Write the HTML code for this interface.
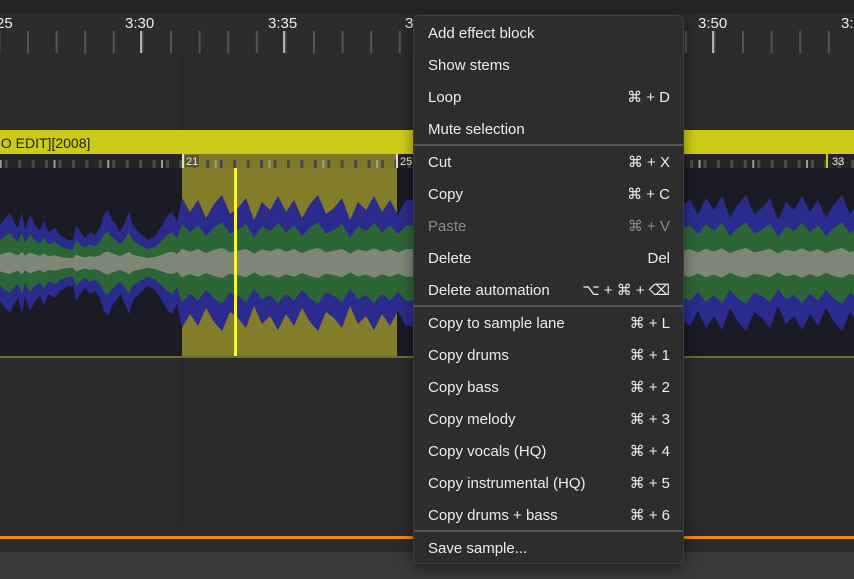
<!DOCTYPE html>
<html><head><meta charset="utf-8"><style>
body{margin:0;width:854px;height:579px;overflow:hidden;background:#2b2b2b;font-family:"Liberation Sans",sans-serif;}
svg{position:absolute;left:0;top:0}
.menu{position:absolute;left:413px;top:15px;width:269px;height:547px;background:#2d2d2d;border:1px solid #3e3e3e;border-radius:6px;box-shadow:0 4px 14px rgba(0,0,0,.45);}
.it{position:absolute;left:14px;right:13px;height:20px;line-height:20px;font-size:15px;color:#ececec;white-space:nowrap}
.it span{position:absolute;right:0;top:0}
.dis{color:#8a8a8a}
.sep{position:absolute;left:0;right:0;height:2px;background:#555}
</style></head><body>
<svg width="854" height="579" viewBox="0 0 854 579">
<defs>
<pattern id="rt" x="-1.6" y="0" width="28.6" height="60" patternUnits="userSpaceOnUse"><rect x="0" y="31" width="2" height="22" fill="#555"/></pattern>
<pattern id="gt" x="20.75" y="0" width="53.75" height="600" patternUnits="userSpaceOnUse"><rect x="0" y="0" width="1" height="600" fill="#262626"/></pattern>
<pattern id="bt" x="-1.25" y="0" width="13.4375" height="20" patternUnits="userSpaceOnUse"><rect x="6" y="0" width="3" height="13" fill="#4a4a4a"/></pattern>
<pattern id="bt2" x="-1.25" y="0" width="53.75" height="20" patternUnits="userSpaceOnUse"><rect x="1" y="0" width="2" height="13" fill="#9a9a9a"/></pattern>
<path id="wv" d="M0,263 L0,225 5,218 10,213 14,222 18,228 22,212 25,230 30,215 35,225 40,230 44,220 48,232 55,228 60,235 68,240 73,240 76,225 80,232 85,238 90,232 95,235 100,228 104,215 108,210 112,220 116,225 120,232 125,222 129,212 133,226 140,233 148,240 155,236 162,225 168,215 172,212 177,222 182,198 190,212 198,200 206,218 214,204 222,195 230,214 238,208 246,198 254,220 262,202 270,210 278,196 286,212 294,200 302,218 310,204 318,195 326,214 334,208 342,198 350,220 358,202 366,210 374,196 382,212 390,200 398,215 406,200 683,205 690,200 698,215 706,198 714,210 722,196 730,218 738,204 746,195 754,214 762,208 770,198 778,220 786,202 794,210 802,196 810,212 818,200 826,218 834,204 842,195 850,214 854,208 854,263 Z"/>
</defs>
<rect x="0" y="0" width="854" height="14" fill="#232323"/>
<rect x="0" y="14" width="854" height="41" fill="#2c2c2c"/>
<rect x="0" y="14" width="854" height="41" fill="url(#rt)"/>
<rect x="140" y="31" width="2" height="22" fill="#b0b0b0"/>
<rect x="283" y="31" width="2" height="22" fill="#b0b0b0"/>
<rect x="712" y="31" width="2" height="22" fill="#b0b0b0"/>
<g fill="#ececec" font-family="Liberation Sans" font-size="15">
<text x="-4" y="28">25</text>
<text x="125" y="28">3:30</text>
<text x="268" y="28">3:35</text>
<text x="405" y="28">3</text>
<text x="698" y="28">3:50</text>
<text x="841" y="28">3:</text>
</g>
<rect x="0" y="55" width="854" height="75" fill="#2b2b2b"/>
<rect x="0" y="55" width="854" height="75" fill="url(#gt)"/>
<rect x="182" y="55" width="1" height="75" fill="#1d1d2a"/>
<rect x="0" y="130" width="854" height="24" fill="#cccc18"/>
<text x="-3" y="148" font-family="Liberation Sans" font-size="14" fill="#222">IO EDIT][2008]</text>
<rect x="0" y="154" width="854" height="14" fill="#242424"/>
<rect x="182" y="154" width="215" height="14" fill="#7f7a28"/>
<rect x="0" y="154" width="854" height="14" fill="url(#bt)"/>
<rect x="0" y="154" width="854" height="14" fill="url(#bt2)"/>
<rect x="182" y="154" width="2" height="14" fill="#ddd"/>
<rect x="396" y="154" width="2" height="14" fill="#ddd"/>
<rect x="826" y="154" width="2" height="14" fill="#cccc18"/>
<g font-family="Liberation Sans" font-size="11" fill="#eee"><rect x="185" y="155" width="14" height="12" fill="#555530"/><text x="186" y="165">21</text><text x="400" y="165">25</text><text x="832" y="165">33</text></g>
<rect x="0" y="168" width="854" height="188" fill="#1b1b26"/>
<rect x="182" y="168" width="215" height="188" fill="#827c2b"/>
<use href="#wv" fill="#2b2b8e"/>
<use href="#wv" fill="#2b2b8e" transform="translate(0,526) scale(1,-1)"/>
<use href="#wv" fill="#2c6636" transform="translate(0,263) scale(1,0.6) translate(0,-263)"/>
<use href="#wv" fill="#2c6636" transform="translate(0,263) scale(1,-0.6) translate(0,-263)"/>
<use href="#wv" fill="#7e8678" transform="translate(0,263) scale(1,0.22) translate(0,-263)"/>
<use href="#wv" fill="#7e8678" transform="translate(0,263) scale(1,-0.22) translate(0,-263)"/>
<rect x="234" y="168" width="3" height="188" fill="#f5f53a"/>
<rect x="0" y="356" width="854" height="2" fill="#6e6a2a"/>
<rect x="0" y="358" width="854" height="165" fill="#2b2b2b"/>
<rect x="0" y="358" width="854" height="165" fill="url(#gt)"/>
<rect x="182" y="358" width="1" height="165" fill="#1d1d2a"/>
<rect x="0" y="523" width="854" height="30" fill="#2a2a2a"/>
<rect x="0" y="536" width="854" height="3" fill="#f08c10"/>
<rect x="0" y="552" width="854" height="27" fill="#393939"/>
</svg>
<div class="menu">
<div class="it" style="top:8px">Add effect block</div>
<div class="it" style="top:40px">Show stems</div>
<div class="it" style="top:72px">Loop<span>⌘ + D</span></div>
<div class="it" style="top:104px">Mute selection</div>
<div class="sep" style="top:128px"></div>
<div class="it" style="top:137px">Cut<span>⌘ + X</span></div>
<div class="it" style="top:169px">Copy<span>⌘ + C</span></div>
<div class="it dis" style="top:201px">Paste<span>⌘ + V</span></div>
<div class="it" style="top:233px">Delete<span>Del</span></div>
<div class="it" style="top:265px">Delete automation<span>⌥ + ⌘ + ⌫</span></div>
<div class="sep" style="top:289px"></div>
<div class="it" style="top:298px">Copy to sample lane<span>⌘ + L</span></div>
<div class="it" style="top:330px">Copy drums<span>⌘ + 1</span></div>
<div class="it" style="top:362px">Copy bass<span>⌘ + 2</span></div>
<div class="it" style="top:394px">Copy melody<span>⌘ + 3</span></div>
<div class="it" style="top:426px">Copy vocals (HQ)<span>⌘ + 4</span></div>
<div class="it" style="top:458px">Copy instrumental (HQ)<span>⌘ + 5</span></div>
<div class="it" style="top:490px">Copy drums + bass<span>⌘ + 6</span></div>
<div class="sep" style="top:514px"></div>
<div class="it" style="top:523px">Save sample...</div>
</div>
</body></html>
